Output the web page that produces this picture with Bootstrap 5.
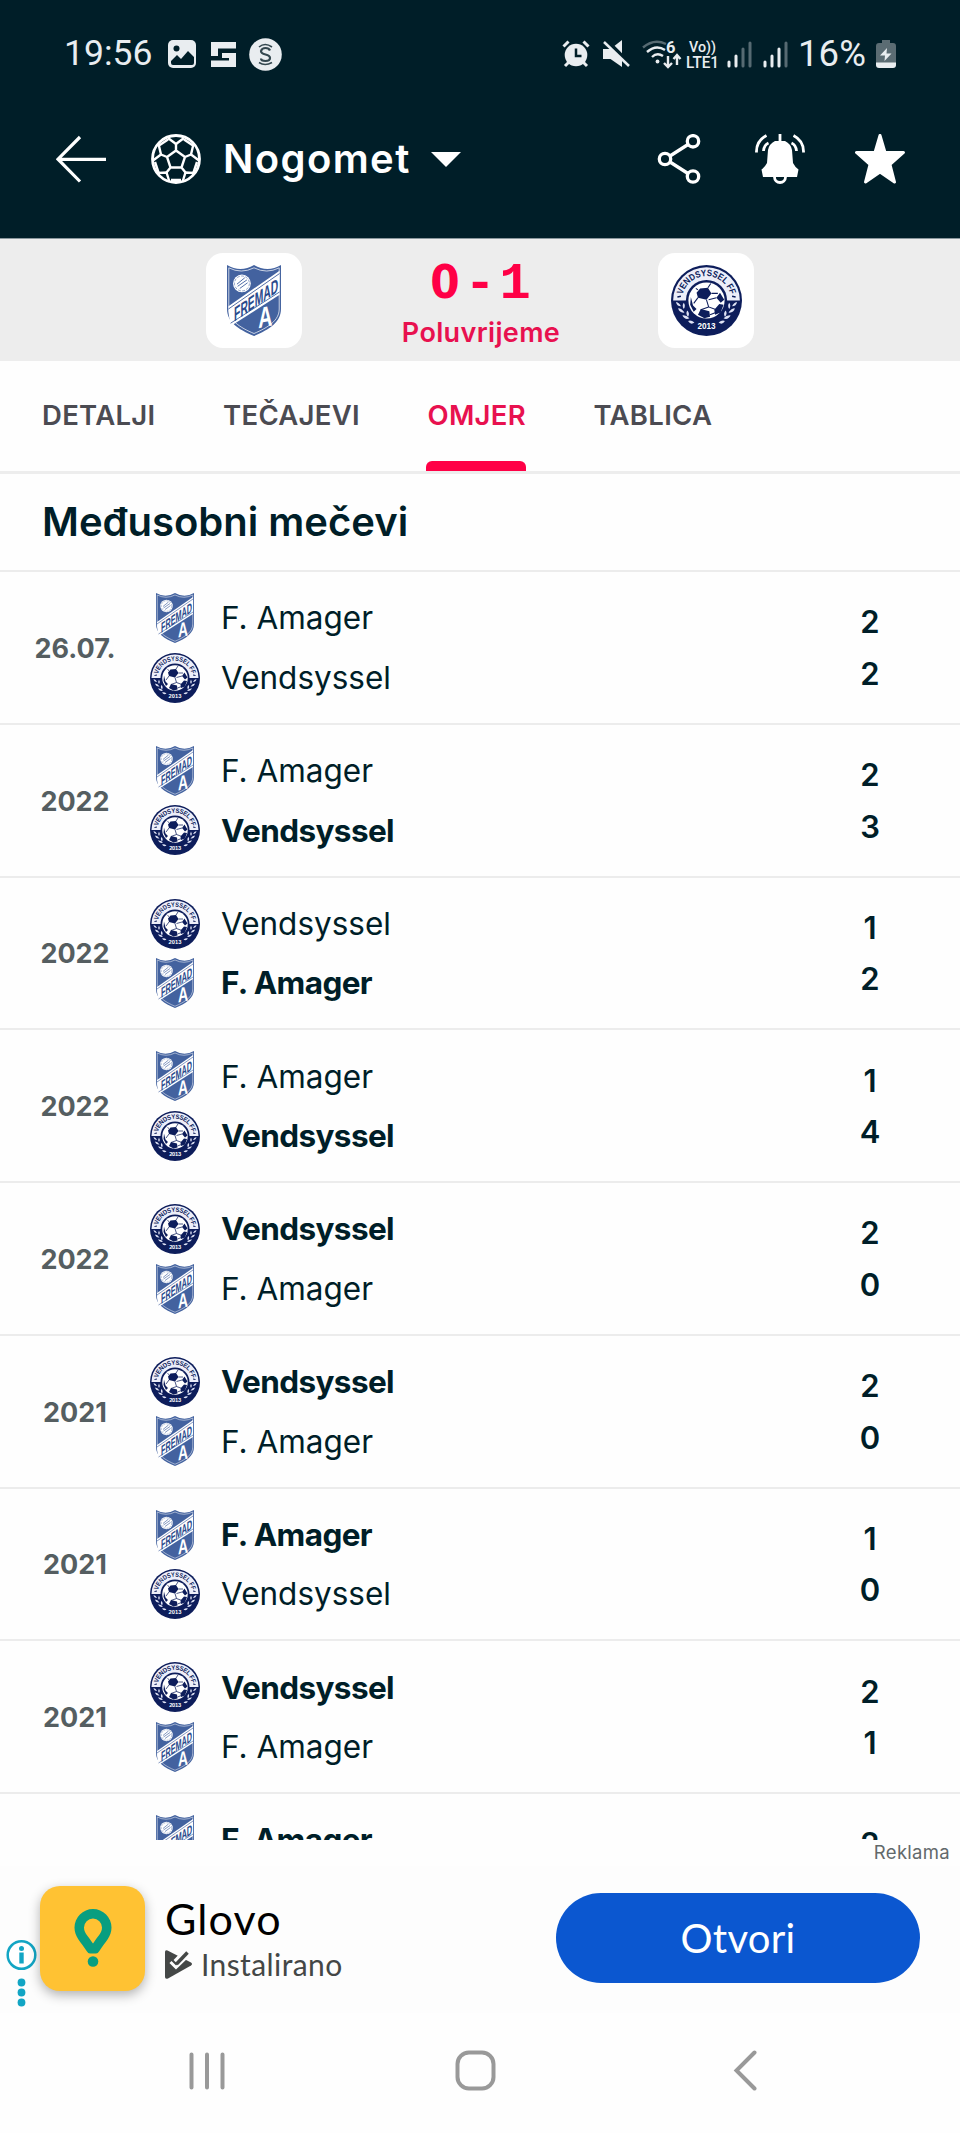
<!DOCTYPE html>
<html lang="hr">

<head>
    <meta charset="UTF-8">
    <meta name="viewport" content="width=device-width, initial-scale=1.0">
    <title>Nogomet</title>
    <link href="https://cdn.jsdelivr.net/npm/bootstrap@5.3.3/dist/css/bootstrap.min.css" rel="stylesheet">
    <script src="https://cdn.jsdelivr.net/npm/bootstrap@5.3.3/dist/js/bootstrap.bundle.min.js"></script>
    <style>
        body {
            width: 960px;
            height: 2133px;
            overflow: hidden;
            background-color: #fefefe;
            color: #001e28;
            font-family: Inter, sans-serif;
            line-height: 1;
        }

        svg {
            display: block;
            flex: none;
        }

        .top-area {
            height: 239px;
            background-color: #001e28;
            border-bottom: 1px solid #8a979d;
        }

        .status-bar {
            height: 107px;
            padding: 1px 64px 0;
            color: #e9edf0;
            font-family: Roboto, sans-serif;
        }

        .status-text {
            font-size: 35.5px;
        }

        .battery-text {
            width: 88px;
            text-align: center;
            font-size: 36.5px;
        }

        .app-bar {
            height: 104px;
            padding: 0 55px 0 56px;
        }

        .app-title {
            font-size: 40px;
            font-weight: 600;
            letter-spacing: 1.4px;
            margin: 0 20px 0 22px;
        }

        .app-actions {
            gap: 50px;
        }

        .score-strip {
            height: 122px;
            background-color: #ededed;
            padding: 14px 206px 0;
        }

        .logo-tile {
            width: 96px;
            height: 95px;
            border-radius: 17px;
            background-color: #fff;
        }

        .live-score {
            height: 47px;
            color: #ff0046;
            font-family: "Liberation Mono", monospace;
            font-size: 52px;
            line-height: 47px;
            font-weight: 700;
            margin-top: 5px;
        }

        .live-score span {
            width: 35px;
            text-align: center;
        }

        /* plain zero, the mono face puts a dot in it */
        .live-score .zero {
            font-family: "DejaVu Sans Condensed", "DejaVu Sans", sans-serif;
            font-stretch: condensed;
            font-size: 47px;
        }

        .live-state {
            color: #e8114f;
            font-size: 27px;
            font-weight: 600;
            letter-spacing: .35px;
            margin: 14px 0 0 2px;
        }

        .tab-strip {
            height: 113px;
            padding-left: 42px;
            gap: 67.5px;
            border-bottom: 3px solid #ededed;
            font-size: 27.5px;
            font-weight: 600;
            letter-spacing: .3px;
        }

        .tab-strip a {
            color: #4b4b52;
            text-decoration: none;
        }

        .tab-strip a.current {
            color: #e8114f;
        }

        .tab-strip a.current::after {
            content: "";
            position: absolute;
            left: -1px;
            right: 0;
            bottom: 0;
            height: 10px;
            border-radius: 6px 6px 0 0;
            background-color: #ff0046;
        }

        .section-title {
            height: 98px;
            padding: 0 0 0 42px;
            font-size: 40px;
            font-weight: 600;
            border-bottom: 2px solid #ececec;
        }

        .match-list {
            height: 1268px;
        }

        .match-row {
            height: 152.75px;
            border-bottom: 2.5px solid #ececec;
            padding-top: 1px;
        }

        .match-date {
            width: 150px;
            padding-top: 1px;
            text-align: center;
            font-size: 27px;
            font-weight: 700;
            color: #555e61;
        }

        .match-teams {
            gap: 9.5px;
        }

        .match-team {
            gap: 21px;
            height: 50px;
            font-size: 31.5px;
        }

        .match-team.win {
            font-weight: 700;
            letter-spacing: -.6px;
        }

        .match-goals {
            width: 40px;
            margin-right: 70px;
            font-size: 31px;
            font-weight: 600;
            line-height: 51.5px;
            text-align: center;
        }

        .ad-label {
            height: 26px;
            padding: 0 10px 2px 0;
            font-size: 18.5px;
            letter-spacing: .3px;
            color: #62696b;
        }

        .ad-banner {
            height: 147px;
            padding: 0 40px 3px 0;
            background-color: #fdfdfd;
            font-family: Lato, sans-serif;
        }

        .ad-info {
            width: 40px;
            margin-top: 75px;
        }

        .ad-logo {
            width: 105px;
            height: 105px;
            border-radius: 20px;
            background-color: #ffc233;
            box-shadow: 0 4px 12px rgba(0, 0, 0, .3);
        }

        .ad-name {
            color: #000;
            font-size: 43px;
            letter-spacing: 1.1px;
            margin-bottom: 9px;
        }

        .ad-note {
            color: #444746;
            font-size: 30px;
            letter-spacing: .4px;
        }

        .ad-button {
            width: 364px;
            height: 90px;
            background-color: #0b57d0;
            color: #fff;
            font-size: 40px;
            letter-spacing: .3px;
            line-height: 1;
        }

        .nav-keys {
            height: 115px;
            padding-left: 189px;
        }
    </style>
</head>

<body>
    <svg class="d-none">
        <symbol id="amager" viewBox="0 0 76 100">
            <path d="M0 0Q19 11 38 0Q57 11 76 0V62C76 80 60 91 38 100C16 91 0 80 0 62Z" fill="#43629f" />
            <path d="M2.500 4Q20 13 38 4Q56 13 73.500 4V62C73.500 78 58 88 38 96.500C18 88 2.500 78 2.500 62Z" fill="none" stroke="#fff" stroke-width="1" />
            <path d="M2 58L74 8V42L7 85Q2 76 2 62Z" fill="#fff" />
            <path d="M2 62L74 12M5 82L74 38" stroke="#43629f" stroke-width="1.300" />
            <circle cx="21" cy="26" r="12.500" fill="#fff" />
            <circle cx="21" cy="26" r="10.500" fill="none" stroke="#43629f" stroke-width=".8" stroke-dasharray="4 2" />
            <path d="M14 27L25 18M15 30L28 21M18 33L29 25" stroke="#43629f" stroke-width="1.300" />
            <text transform="matrix(1 -.69 0 1 10 80)" font-family="Liberation Sans" font-weight="700" font-size="28" textLength="62" lengthAdjust="spacingAndGlyphs" fill="#2b4b8c">FREMAD</text>
            <text transform="matrix(1 -.2 0 1 44 89)" font-family="Liberation Sans" font-weight="700" font-size="41" textLength="20" lengthAdjust="spacingAndGlyphs" fill="#fff">A</text>
        </symbol>
        <symbol id="vendsyssel" viewBox="0 0 100 100">
            <circle cx="50" cy="50" r="50" fill="#0d1d5b" />
            <path d="M3 50a47 47 0 0 1 94 0z" fill="#eceef9" />
            <circle cx="50" cy="50" r="29" fill="#0d1d5b" />
            <circle cx="50" cy="50" r="25.500" fill="#fff" />
            <path d="M41 33l11-1 5 8-7 9-12-3-2-7zM69 39l6 10-5 4-6-7zM28 45l3 12 5 5-4 4-5-10zM68 55l6 1-4 11-8 3-1-7zM42 62l12 3 1 8-8 2-9-5z" fill="#0d1d5b" />
            <path d="M50 49l3 10 11 4M53 59l-11 4M38 46l-6 8M57 40l9 0M38 35l-3-2M52 32l4-6M55 70l8-3M64 46l-11 3" fill="none" stroke="#0d1d5b" stroke-width="1.500" />
            <path id="crestArc" d="M15.500 50a34.500 34.500 0 0 1 69 0" fill="none" />
            <text font-family="Liberation Sans" font-weight="700" font-size="13" fill="#0d1d5b">
                <textPath href="#crestArc" startOffset="8" textLength="92" lengthAdjust="spacingAndGlyphs">VENDSYSSEL FF</textPath>
            </text>
            <path d="M9 45l5-1M91 45l-5-1" stroke="#0d1d5b" stroke-width="2" />
            <path d="M7 52q5 1 7 6-6 0-7-6zM10 61q5 0 9 6-7 1-9-6zM16 71q5-1 10 4-6 3-10-4zM18 53q-3 4 0 9 3-5 0-9zM23 64q-3 4 1 9 3-5-1-9zM24 79q4-2 9 2-5 4-9-2zM93 52q-5 1-7 6 6 0 7-6zM90 61q-5 0-9 6 7 1 9-6zM84 71q-5-1-10 4 6 3 10-4zM82 53q3 4 0 9-3-5 0-9zM77 64q3 4-1 9-3-5 1-9zM76 79q-4-2-9 2 5 4 9-2z" fill="#dfe3f5" />
            <text x="50" y="90" text-anchor="middle" font-family="Liberation Sans" font-weight="700" font-size="11.500" fill="#fff">2013</text>
        </symbol>
    </svg>

    <header class="top-area">
        <div class="status-bar d-flex align-items-center">
            <span class="status-text">19:56</span>
            <svg class="ms-3" width="28" height="28" viewBox="0 0 28 28">
                <rect width="28" height="28" rx="5" fill="#e9edf0" />
                <circle cx="8.500" cy="8.500" r="3" fill="#001e28" />
                <path d="M3 21l6-6 4 4 7-8 6 6v6q0 2-2 2H5q-2 0-2-2z" fill="#001e28" />
            </svg>
            <svg style="margin-left:15px" width="25" height="25" viewBox="0 0 25 25">
                <path d="M0 0H25V6.500H7V14H0zM25 25H0V18.500H18V16H11V11H25z" fill="#e9edf0" />
            </svg>
            <svg style="margin-left:13px" width="33" height="33" viewBox="0 0 33 33">
                <circle cx="16.500" cy="16.500" r="16.300" fill="#e9edf0" />
                <path d="M21 12.500q-1-2.500-4.500-2.500t-4.500 3q0 2.500 4.500 3.500t4.500 3.500q0 3-4.500 3t-4.500-2.500" fill="none" stroke="#33474f" stroke-width="2.200" />
                <path d="M10 9q6-5 13 0M10 24.500q6 4 13 0" fill="none" stroke="#33474f" stroke-width="1.600" />
            </svg>
            <div class="d-flex align-items-center ms-auto">
                <svg width="28" height="28" viewBox="0 0 28 28" stroke="#e9edf0" fill="none">
                    <circle cx="14" cy="15" r="11.300" fill="#e9edf0" stroke="none" />
                    <path d="M1.500 6.500l5-5M26.500 6.500l-5-5M3 26l4-4M25 26l-4-4" stroke-width="3" />
                    <path d="M14 8.500v7.500h5.500" stroke="#001e28" stroke-width="2.500" />
                </svg>
                <svg style="margin-left:13px" width="27" height="28" viewBox="0 0 27 28">
                    <path d="M0 9h7.500l11.500-9v27l-11.500-8H0z" fill="#e9edf0" />
                    <path d="M3 0L28 25" stroke="#001e28" stroke-width="4" />
                    <path d="M1 2l25 24" stroke="#e9edf0" stroke-width="2.500" />
                </svg>
                <svg style="margin-left:12px" width="40" height="30" viewBox="0 0 40 30" fill="none" stroke="#e9edf0" stroke-width="2.400">
                    <path d="M1 8.500Q12-1 24 5" stroke="#566a72" />
                    <path d="M5 13q9-8 18-2M10 18q5-5 11-1" />
                    <circle cx="15.500" cy="22.500" r="1.900" fill="#e9edf0" stroke="none" />
                    <path d="M26 17v11M22 24l4 4 4-4M35 26V16M31.500 20l3.500-4 3.500 4" />
                    <text x="24" y="14" font-size="16.500" font-weight="700" fill="#e9edf0" stroke="none">6</text>
                </svg>
                <svg style="margin-left:3px" width="35" height="30" viewBox="0 0 35 30" fill="#e9edf0" font-weight="500">
                    <text x="4" y="13" font-size="15.500" textLength="27" lengthAdjust="spacingAndGlyphs">Vo))</text>
                    <text x="1" y="28.500" font-size="16" textLength="33" lengthAdjust="spacingAndGlyphs">LTE1</text>
                </svg>
                <svg style="margin-left:7px" width="25" height="27" viewBox="0 0 25 27" stroke-linecap="round" stroke-width="3">
                    <path d="M2 21v4M9 15v10" stroke="#e9edf0" />
                    <path d="M16 8v17M23 2v23" stroke="#566a72" />
                </svg>
                <svg style="margin-left:11px" width="25" height="27" viewBox="0 0 25 27" stroke-linecap="round" stroke-width="3">
                    <path d="M2 21v4M9 15v10M16 8v17" stroke="#e9edf0" />
                    <path d="M23 2v23" stroke="#566a72" />
                </svg>
                <span class="battery-text">16%</span>
                <svg width="20" height="28" viewBox="0 0 20 28">
                    <path d="M6 0h8v3h3q3 0 3 3v17H0V6q0-3 3-3h3z" fill="#5b6c73" />
                    <path d="M0 22.500h20V25q0 3-3 3H3q-3 0-3-3z" fill="#e9edf0" />
                    <path d="M11 8l-7 7.500h5L8.500 21l7-7.500h-5z" fill="#e9edf0" />
                </svg>
            </div>
        </div>

        <div class="app-bar d-flex align-items-center text-white">
            <svg width="50" height="50" viewBox="0 0 50 50" fill="none" stroke="#fff" stroke-width="3.200">
                <path d="M50 25.300H2.500M24 3L2 25.200 24 47.500" />
            </svg>
            <svg style="margin-left:45px" width="50" height="50" viewBox="0 0 50 50" fill="none" stroke="#fff" stroke-width="2.400">
                <circle cx="25" cy="25" r="23.500" stroke-width="2.800" />
                <path d="M25 16.500l9 6.500-3.500 10.500h-11L16 23zM25 16.500V10M34 23l6-2.500M30.500 33.500l4 5M19.500 33.500l-4 5M16 23l-6-2.500" />
                <path d="M17 4l8 6 8-6M33 5.500l9 6M42.500 10L40 20.500l8 6M46 28l-3.500 10.500M43.500 39l-9-.5L31.500 48M30 46H20M18.500 48l-3-9.500-9 .5M7.500 38.500L4 28M2 26.500l8-6L7.500 10M8 11.500l9-6" />
            </svg>
            <span class="app-title">Nogomet</span>
            <svg width="30" height="15" viewBox="0 0 30 15">
                <path d="M0 0h30L15 15z" fill="#fff" />
            </svg>
            <div class="app-actions d-flex ms-auto">
                <svg width="50" height="50" viewBox="0 0 50 50" fill="none" stroke="#fff" stroke-width="3.300">
                    <circle cx="38" cy="7.300" r="5.700" />
                    <circle cx="10" cy="25" r="5.700" />
                    <circle cx="38" cy="42.500" r="5.700" />
                    <path d="M15 22l18-11.500M15 28l18 11.500" />
                </svg>
                <svg width="50" height="50" viewBox="0 0 50 50" fill="none" stroke="#fff" stroke-width="2.800">
                    <path d="M25 0v8" />
                    <path d="M20 7h10q6 3 7 9l1 13q2 4 5.500 6.500L42 43H8l-1.500-7.500Q10 33 12 29l1-13q1-6 7-9z" fill="#fff" stroke="none" />
                    <path d="M19.500 43a5.500 5.500 0 0 0 11 0" />
                    <path d="M11.500 1.500Q1 7 1.500 18.500M13.500 9Q9 11 8.500 17M38.500 1.500Q49 7 48.500 18.500M36.500 9q4.500 2 5 8" />
                </svg>
                <svg width="50" height="50" viewBox="0 0 50 50">
                    <path d="M25 1.500L30 18.500H48.500L35 30.500 39.500 48 25 38 10.500 48 15 30.500 1.500 18.500H20z" fill="#fff" stroke="#fff" stroke-width="3" stroke-linejoin="round" />
                </svg>
            </div>
        </div>
    </header>

    <section class="score-strip d-flex justify-content-between">
        <div class="logo-tile d-flex align-items-center justify-content-center">
            <svg width="54" height="71"><use href="#amager" /></svg>
        </div>
        <div class="d-flex flex-column align-items-center">
            <div class="live-score d-flex align-items-baseline"><span class="zero">0</span><span>-</span><span>1</span></div>
            <div class="live-state">Poluvrijeme</div>
        </div>
        <div class="logo-tile d-flex align-items-center justify-content-center">
            <svg width="71" height="71"><use href="#vendsyssel" /></svg>
        </div>
    </section>

    <nav class="tab-strip d-flex">
        <a href="#" class="d-flex align-items-center">DETALJI</a>
        <a href="#" class="d-flex align-items-center">TEČAJEVI</a>
        <a href="#" class="current d-flex align-items-center position-relative">OMJER</a>
        <a href="#" class="d-flex align-items-center">TABLICA</a>
    </nav>

    <h1 class="section-title d-flex align-items-center m-0">Međusobni mečevi</h1>

    <main class="match-list overflow-hidden" id="matches"></main>

    <div class="ad-label d-flex align-items-center justify-content-end">Reklama</div>
    <div class="ad-banner d-flex align-items-center">
        <div class="ad-info">
            <svg width="40" height="76" viewBox="0 0 40 76" fill="#12a5c4">
                <circle cx="21.500" cy="17" r="13.800" fill="#fff" stroke="#12a5c4" stroke-width="2.500" />
                <circle cx="21.500" cy="10.500" r="2.500" />
                <path d="M19.300 14.500h4.400v11h-4.400z" />
                <circle cx="21.500" cy="44.500" r="3.900" />
                <circle cx="21.500" cy="54.500" r="3.900" />
                <circle cx="21.500" cy="64.500" r="3.900" />
            </svg>
        </div>
        <div class="ad-logo d-flex align-items-center justify-content-center">
            <svg width="38" height="58" viewBox="0 0 38 58" fill="#089e80">
                <path fill-rule="evenodd" d="M19 0a18.500 18.500 0 0 1 18.500 18.500c0 9-6 14-12.500 24q-1 2-3 2h-6q-2 0-3-2C6.500 32.500.5 27.500.5 18.500A18.500 18.500 0 0 1 19 0zM19 9.500a9 9 0 0 0-9 9C10 24 14 27 19 34.500 24 27 28 24 28 18.500a9 9 0 0 0-9-9z" />
                <circle cx="19" cy="52.500" r="5.300" />
            </svg>
        </div>
        <div class="ms-3 ps-1">
            <div class="ad-name">Glovo</div>
            <div class="ad-note d-flex align-items-center">
                <svg class="me-2" width="28" height="29" viewBox="0 0 28 29">
                    <path d="M0 2Q0-.5 2.500.5L26 12.500q2 1.500 0 3L3 28.500Q0 29.500 0 27z" fill="#444746" />
                    <path d="M10 11.500L20 1" stroke="#fdfdfd" stroke-width="4" />
                    <path d="M5.500 12l5.500 5.500L23 6" fill="none" stroke="#fdfdfd" stroke-width="3" />
                    <path d="M11.500 14L22.500 2.500" stroke="#444746" stroke-width="3.500" />
                </svg>
                <span>Instalirano</span>
            </div>
        </div>
        <button type="button" class="ad-button btn rounded-pill ms-auto border-0 p-0">Otvori</button>
    </div>

    <nav class="nav-keys d-flex align-items-center">
        <svg width="36" height="40" viewBox="0 0 36 40" stroke="#999" stroke-width="4" stroke-linecap="round">
            <path d="M2.500 3.500v33M18 3.500v33M33.500 3.500v33" />
        </svg>
        <svg style="margin-left:230px" width="41" height="41" viewBox="0 0 41 41">
            <rect x="2.500" y="2.500" width="36" height="36" rx="11.500" fill="none" stroke="#999" stroke-width="4" />
        </svg>
        <svg style="margin-left:237px" width="25" height="41" viewBox="0 0 25 41">
            <path d="M21.500 2.500L3.500 20.500l18 18" fill="none" stroke="#999" stroke-width="4" stroke-linecap="round" />
        </svg>
    </nav>

    <script>
        const names = { a: "F. Amager", v: "Vendsyssel" };
        const crests = {
            a: '<svg width="50" height="50"><use href="#amager" /></svg>',
            v: '<svg width="50" height="50"><use href="#vendsyssel" /></svg>'
        };

        // date, home, away, home goals, away goals
        const matches = [
            ["26.07.", "a", "v", 2, 2],
            ["2022", "a", "v", 2, 3],
            ["2022", "v", "a", 1, 2],
            ["2022", "a", "v", 1, 4],
            ["2022", "v", "a", 2, 0],
            ["2021", "v", "a", 2, 0],
            ["2021", "a", "v", 1, 0],
            ["2021", "v", "a", 2, 1],
            ["2021", "a", "v", 2, 0]
        ];

        function team(key, won) {
            return `<div class="match-team d-flex align-items-center ${won ? "win" : ""}">${crests[key]}<span>${names[key]}</span></div>`;
        }

        document.getElementById("matches").innerHTML = matches.map(function (m) {
            return `<div class="match-row d-flex align-items-center">
                <div class="match-date">${m[0]}</div>
                <div class="match-teams d-flex flex-column">${team(m[1], m[3] > m[4])}${team(m[2], m[4] > m[3])}</div>
                <div class="match-goals ms-auto"><div>${m[3]}</div><div>${m[4]}</div></div>
            </div>`;
        }).join("");
    </script>
</body>

</html>
